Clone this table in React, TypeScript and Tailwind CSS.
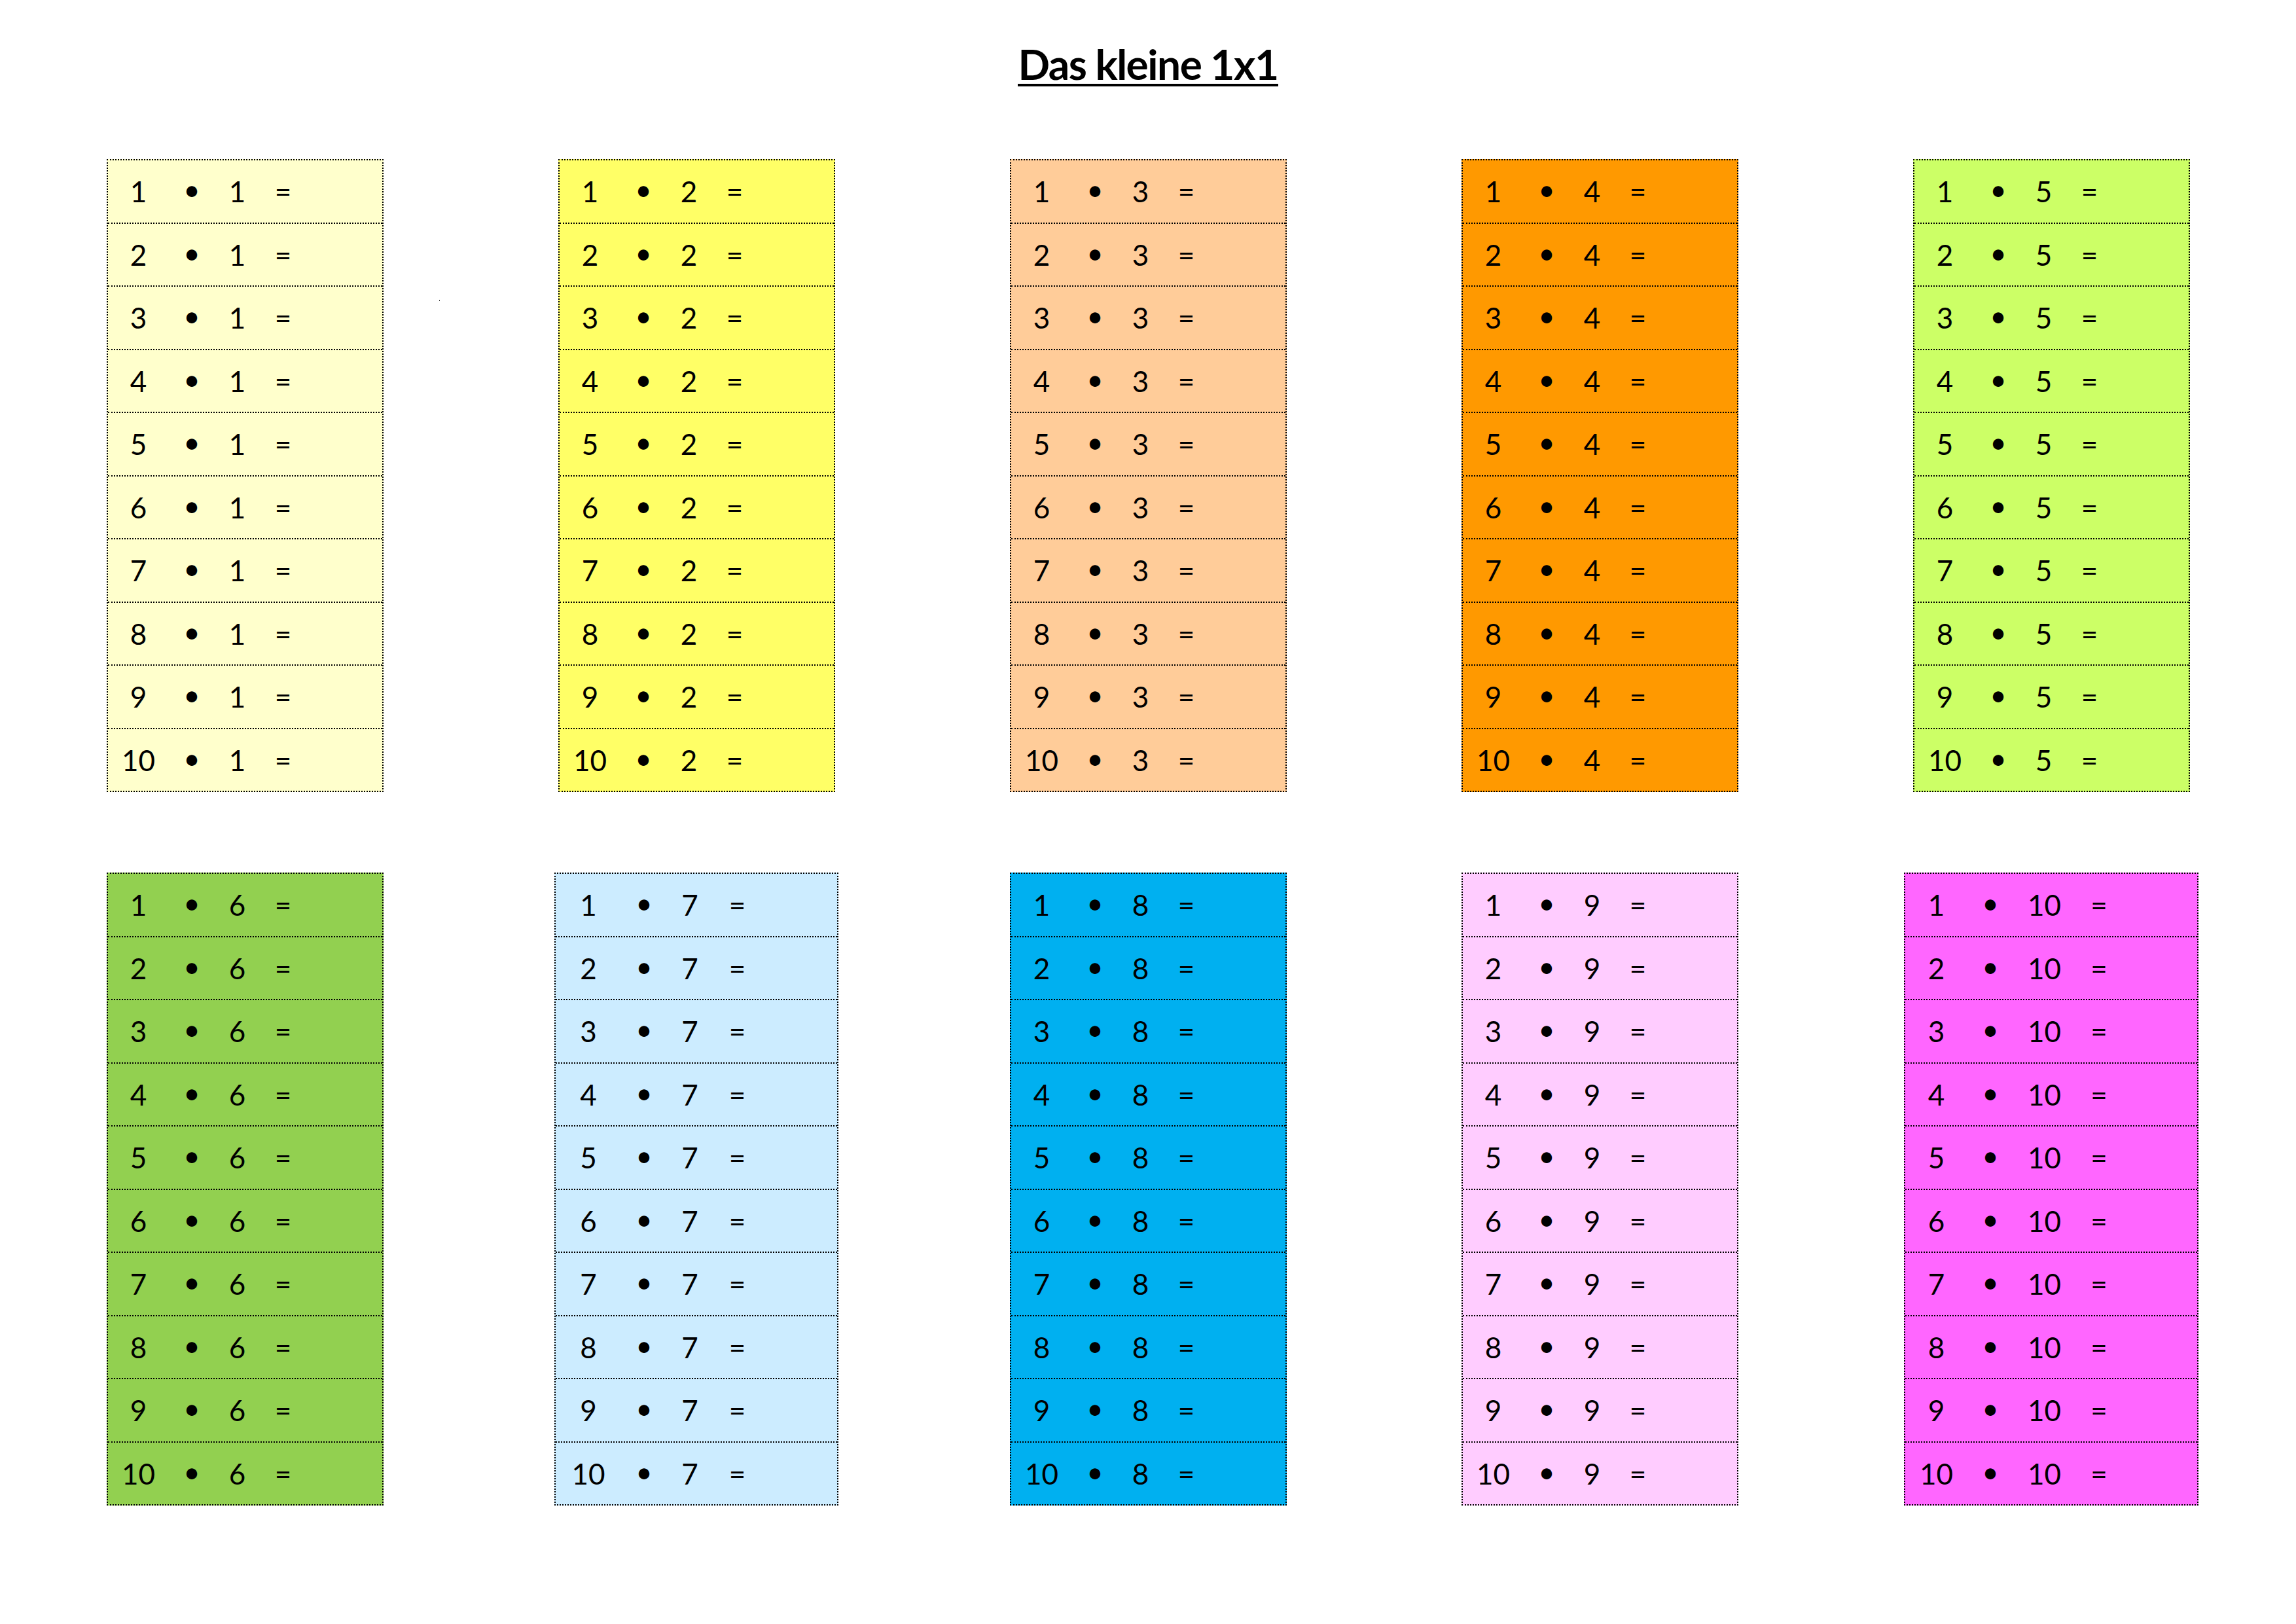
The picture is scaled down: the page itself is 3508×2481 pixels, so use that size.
import React from "react";

type TableSpec = { n: number; bg: string; cols: string };

const ROW1: TableSpec[] = [
  { n: 1, bg: "bg-[#FFFFCC]", cols: "grid-cols-[94px_69px_70px_70px_116px]" },
  { n: 2, bg: "bg-[#FFFF66]", cols: "grid-cols-[94px_69px_70px_70px_116px]" },
  { n: 3, bg: "bg-[#FFCC99]", cols: "grid-cols-[94px_69px_70px_70px_116px]" },
  { n: 4, bg: "bg-[#FF9900]", cols: "grid-cols-[94px_69px_70px_70px_116px]" },
  { n: 5, bg: "bg-[#CCFF66]", cols: "grid-cols-[94px_69px_70px_70px_116px]" },
];

const ROW2: TableSpec[] = [
  { n: 6, bg: "bg-[#92D050]", cols: "grid-cols-[94px_69px_70px_70px_116px]" },
  { n: 7, bg: "bg-[#CCECFF]", cols: "grid-cols-[100px_70px_70px_75px_115px]" },
  { n: 8, bg: "bg-[#00B0F0]", cols: "grid-cols-[94px_69px_70px_70px_116px]" },
  { n: 9, bg: "bg-[#FFCCFF]", cols: "grid-cols-[94px_69px_70px_70px_116px]" },
  { n: 10, bg: "bg-[#FF66FF]", cols: "grid-cols-[95px_70px_95px_72px_114px]" },
];

const FACTORS = [1, 2, 3, 4, 5, 6, 7, 8, 9, 10];

function Table({ spec }: { spec: TableSpec }) {
  return (
    <div className={`border-2 border-dotted border-black ${spec.bg}`}>
      {FACTORS.map((i) => (
        <div
          key={i}
          className={
            i === 1
              ? `grid ${spec.cols} h-[94.5px] items-center text-center`
              : `grid ${spec.cols} h-[96.5px] items-center text-center border-t-2 border-dotted border-black`
          }
        >
          <span>{i}</span>
          <span className="relative top-[-3px]">•</span>
          <span>{spec.n}</span>
          <span>=</span>
          <span />
        </div>
      ))}
    </div>
  );
}

export default function App() {
  return (
    <div className="relative w-[3508px] h-[2481px] bg-white text-black font-['Lato',sans-serif]">
      <div className="pt-[68px] flex justify-center">
        <h1 className="leading-[60px] text-[64px] tracking-[-1.5px] font-bold border-b-[4px] border-black">
          Das kleine 1x1
        </h1>
      </div>
      <div className="mt-[111px] pl-[29px] grid grid-cols-[repeat(5,690px)] justify-items-center items-start gap-y-[123px] text-[44px] leading-none">
        {ROW1.map((s) => (
          <Table key={s.n} spec={s} />
        ))}
        {ROW2.map((s) => (
          <Table key={s.n} spec={s} />
        ))}
      </div>
      <div className="absolute left-[671px] top-[458px] w-[1px] h-[2px] bg-[#444]" />
    </div>
  );
}
